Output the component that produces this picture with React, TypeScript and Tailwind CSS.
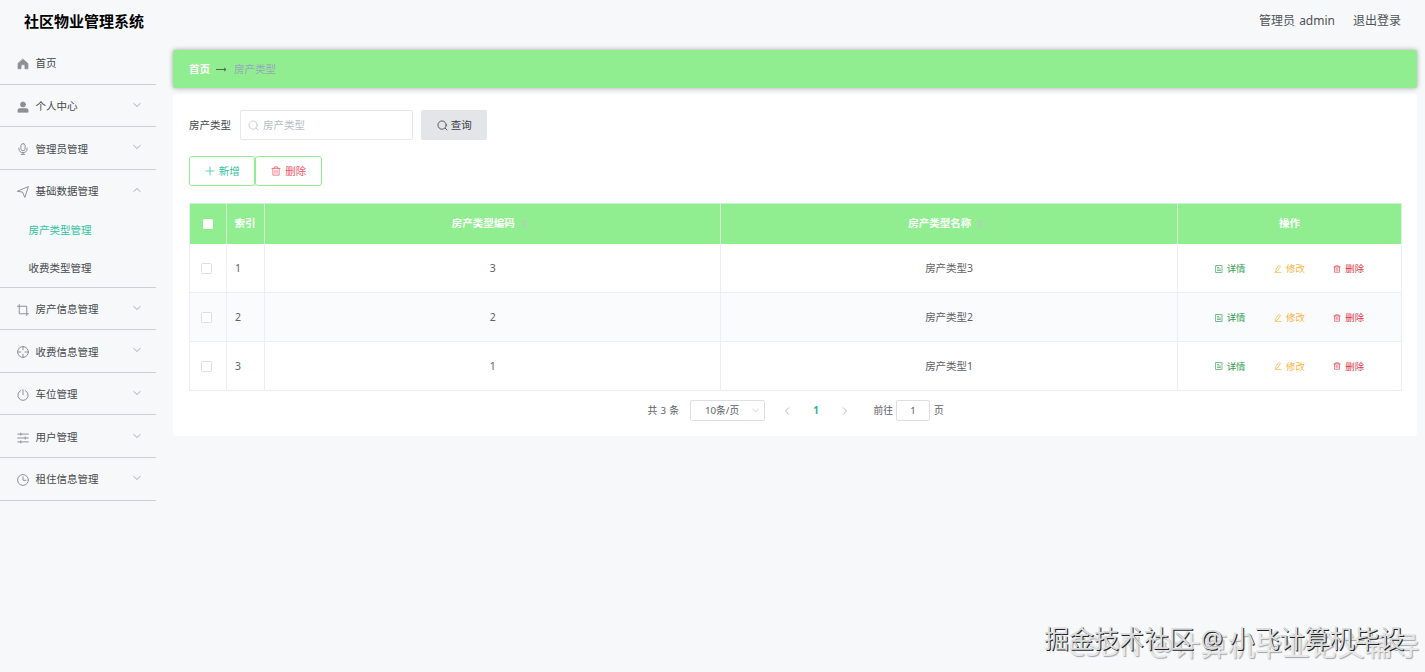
import { useState } from 'react'
import type { ReactNode } from 'react'

type IconProps = { className?: string }

function Svg({ className, children, w = 1 }: { className?: string; children: ReactNode; w?: number }) {
  return (
    <svg
      viewBox="0 0 16 16"
      fill="none"
      stroke="currentColor"
      strokeWidth={w}
      strokeLinecap="round"
      strokeLinejoin="round"
      className={className}
    >
      {children}
    </svg>
  )
}

const HomeIcon = ({ className }: IconProps) => (
  <Svg className={className}>
    <path fill="currentColor" d="M8 1.6 L14.6 7.4 V14.4 H10.6 V10.4 Q10.6 8.8 8 8.8 Q5.4 8.8 5.4 10.4 V14.4 H1.4 V7.4 Z" />
  </Svg>
)

const UserIcon = ({ className }: IconProps) => (
  <Svg className={className}>
    <circle cx="8" cy="4.6" r="3.4" fill="currentColor" />
    <path fill="currentColor" d="M1.3 14.6 V12 Q1.3 10.2 3.2 10.2 H12.8 Q14.7 10.2 14.7 12 V14.6 Z" />
  </Svg>
)

const MicIcon = ({ className }: IconProps) => (
  <Svg className={className} w={1.3}>
    <rect x="5.2" y="0.8" width="5.6" height="9.6" rx="2.8" />
    <path d="M2.6 6.6 V7.6 A5.4 5.2 0 0 0 13.4 7.6 V6.6 M8 12.8 V15.2 M5.8 15.2 H10.2" />
  </Svg>
)

const SendIcon = ({ className }: IconProps) => (
  <Svg className={className} w={1.3}>
    <path d="M0.8 6.8 L15.2 0.8 L10.4 15.2 L7.6 8.6 Z" />
  </Svg>
)

const CropIcon = ({ className }: IconProps) => (
  <Svg className={className} w={1.3}>
    <path d="M3 0.8 V13 H15.4 M0.6 3 H13 V15.4" />
  </Svg>
)

const AimIcon = ({ className }: IconProps) => (
  <Svg className={className} w={1.3}>
    <circle cx="8" cy="8" r="7.2" />
    <path d="M8 1 V5 M8 11 V15 M1 8 H5 M11 8 H15" />
  </Svg>
)

const PowerIcon = ({ className }: IconProps) => (
  <Svg className={className} w={1.3}>
    <path d="M5 2 A6.9 6.9 0 1 0 11 2 M8 0.8 V7.6" />
  </Svg>
)

const SlidersIcon = ({ className }: IconProps) => (
  <Svg className={className} w={1.3}>
    <path d="M1 2.8 H15 M1 8 H15 M1 13.2 H15 M5 1.4 V4.2 M11 6.6 V9.4 M5 11.8 V14.6" />
  </Svg>
)

const ClockIcon = ({ className }: IconProps) => (
  <Svg className={className} w={1.3}>
    <circle cx="8" cy="8" r="7.2" />
    <path d="M8 3.8 V8.4 H12" />
  </Svg>
)

const Chevron = ({ className }: IconProps) => (
  <Svg className={className} w={1.7}>
    <path d="M1.6 5 L8 11 L14.4 5" />
  </Svg>
)

const SearchIcon = ({ className }: IconProps) => (
  <Svg className={className} w={1.2}>
    <circle cx="7.4" cy="7.4" r="6" />
    <path d="M12 12 L14.6 14.6" />
  </Svg>
)

const PlusIcon = ({ className }: IconProps) => (
  <Svg className={className} w={1.2}>
    <path d="M8 1.5 V14.5 M1.5 8 H14.5" />
  </Svg>
)

const TrashIcon = ({ className }: IconProps) => (
  <Svg className={className} w={1.2}>
    <path d="M1.5 3.8 H14.5 M5.4 3.8 V1.4 H10.6 V3.8 M3 3.8 V14.6 H13 V3.8 M6.4 6.8 V11.6 M9.6 6.8 V11.6" />
  </Svg>
)

const DocIcon = ({ className }: IconProps) => (
  <Svg className={className} w={1.3}>
    <path d="M2 1 H14 V15 H2 Z M5 5 H7.5 M5 8 H11 M5 11 H11" />
  </Svg>
)

const EditIcon = ({ className }: IconProps) => (
  <Svg className={className} w={1.4}>
    <path d="M10.4 1.2 L13 3 L6.6 12.4 L3 13.6 L3.4 10.2 Z M1.6 15.2 H14.4" />
  </Svg>
)

type MenuItem = {
  label: string
  icon: (p: IconProps) => ReactNode
  leaf?: boolean
  children?: string[]
}

const MENU: MenuItem[] = [
  { label: '首页', icon: HomeIcon, leaf: true },
  { label: '个人中心', icon: UserIcon },
  { label: '管理员管理', icon: MicIcon },
  { label: '基础数据管理', icon: SendIcon, children: ['房产类型管理', '收费类型管理'] },
  { label: '房产信息管理', icon: CropIcon },
  { label: '收费信息管理', icon: AimIcon },
  { label: '车位管理', icon: PowerIcon },
  { label: '用户管理', icon: SlidersIcon },
  { label: '租住信息管理', icon: ClockIcon },
]

const ROWS = [
  { id: 1, code: '3', name: '房产类型3' },
  { id: 2, code: '2', name: '房产类型2' },
  { id: 3, code: '1', name: '房产类型1' },
]

const COLS = 'grid grid-cols-[37px_38px_456.5px_456.5px_1fr]'

function Sidebar() {
  const [open, setOpen] = useState('基础数据管理')
  const [active, setActive] = useState('房产类型管理')

  return (
    <aside className="w-[156px] shrink-0 text-[10.5px] text-[#45484d]">
      {MENU.map(({ label, icon: Icon, leaf, children }) => (
        <div key={label} className="border-b border-[#cdcfd3]">
          <button
            onClick={() => setOpen(open === label ? '' : label)}
            className="flex h-[41.65px] w-full items-center pt-[1.5px] pr-[15px] pl-[17px]"
          >
            <Icon className="mt-px mr-[6.5px] size-3 text-[#8c8f95]" />
            <span>{label}</span>
            {!leaf && (
              <Chevron
                className={
                  children && open === label
                    ? 'mb-[3px] ml-auto size-2 rotate-180 text-[#9a9da3]'
                    : 'mb-[3px] ml-auto size-2 text-[#9a9da3]'
                }
              />
            )}
          </button>
          {children && open === label && children.map((c) => (
            <button
              key={c}
              onClick={() => setActive(c)}
              className={
                active === c
                  ? 'flex h-[37.5px] w-full items-center pl-[28.5px] text-[#2ec4a0]'
                  : 'flex h-[37.5px] w-full items-center pt-px pl-[28.5px]'
              }
            >
              {c}
            </button>
          ))}
        </div>
      ))}
    </aside>
  )
}

function SortCaret() {
  return (
    <svg viewBox="0 0 8 12" className="mr-[3px] ml-[6px] h-[10px] w-[7px] fill-[#b0cfb8]">
      <path d="M4 0.5 L7.5 5 H0.5 Z M4 11.5 L0.5 7 H7.5 Z" />
    </svg>
  )
}

function Table() {
  return (
    <div className="mt-[17px] border-l border-[#ebeef5] text-[10.5px] text-[#606266]">
      <div className={`${COLS} h-[41px] border-t border-[#c9f5cb] bg-[#90ee90] font-bold text-white *:flex *:items-center *:border-r *:border-[#d5f8d6] *:pb-px`}>
        <div className="justify-center">
          <span className="size-[10px] rounded-[1.5px] bg-white" />
        </div>
        <div className="pl-[7.5px]">索引</div>
        <div className="justify-center pr-[3px]">房产类型编码<SortCaret /></div>
        <div className="justify-center pr-[3px]">房产类型名称<SortCaret /></div>
        <div className="justify-center">操作</div>
      </div>
      {ROWS.map((r, i) => (
        <div
          key={r.id}
          className={`${COLS} h-[48.9px] border-b border-[#ebeef5] *:flex *:items-center *:border-r *:border-[#ebeef5] *:pt-[1.5px] ${i % 2 ? 'bg-[#fafbfd]' : 'bg-white'}`}
        >
          <div className="justify-center pr-[3px]">
            <span className="size-[11px] rounded-[1.5px] border border-[#dcdfe6] bg-white" />
          </div>
          <div className="pl-[8px]">{r.id}</div>
          <div className="justify-center">{r.code}</div>
          <div className="justify-center">{r.name}</div>
          <div className="justify-center gap-[28.5px] text-[9.4px]">
            <button className="flex items-center gap-1 text-[#2f9e4f]">
              <DocIcon className="size-[8px]" />详情
            </button>
            <button className="flex items-center gap-1 text-[#fbb43c]">
              <EditIcon className="size-[8px]" />修改
            </button>
            <button className="flex items-center gap-1 text-[#dc3545]">
              <TrashIcon className="size-[8px]" />删除
            </button>
          </div>
        </div>
      ))}
    </div>
  )
}

function Pagination() {
  return (
    <div className="mt-[9.5px] flex h-[21px] items-center pl-[458.5px] text-[9.75px] text-[#606266]">
      <span className="[word-spacing:0.7px]">共 3 条</span>
      <div className="ml-[11px] flex h-[21px] w-[75px] items-center rounded-[2px] border border-[#dcdfe6] pr-[5px] pl-[14px]">
        10条/页
        <Chevron className="ml-auto size-[7px] text-[#c0c4cc]" />
      </div>
      <Chevron className="ml-[18px] size-2 rotate-90 text-[#a8abb2]" />
      <span className="ml-[22px] w-[6px] text-center font-bold text-[#1fb98f]">1</span>
      <Chevron className="ml-[22px] size-2 -rotate-90 text-[#a8abb2]" />
      <span className="ml-[24.5px]">前往</span>
      <div className="ml-[3px] flex h-[21px] w-[34px] items-center justify-center rounded-[2px] border border-[#dcdfe6]">1</div>
      <span className="ml-[4px]">页</span>
    </div>
  )
}

export default function App() {
  return (
    <div className="relative h-[672px] w-[1425px] overflow-hidden bg-[#f6f8fa] font-['Noto_Sans','Noto_Sans_CJK_SC',sans-serif] leading-none">
      <header className="flex h-[42px] items-center justify-between px-6 text-xs leading-none text-[#505256]">
        <h1 className="text-[15px] font-bold text-black">社区物业管理系统</h1>
        <div className="flex items-center gap-[18px]">
          <span className="[word-spacing:1px]">管理员 admin</span>
          <button>退出登录</button>
        </div>
      </header>

      <div className="flex">
        <Sidebar />
        <main className="mt-2 ml-[17.4px] w-[1244px]">
          <nav className="flex h-[38px] items-center rounded-[2px] bg-[#90ee90] pl-[15.5px] text-[10.5px] shadow-[0_0_5px_rgba(0,0,0,0.35)]">
            <span className="font-bold text-white">首页</span>
            <svg viewBox="0 0 11 7" className="mx-[6.5px] h-[7px] w-[11px] fill-none stroke-[#404740] stroke-[0.8]">
              <path d="M0 3.5 H10 M8 1.8 L10 3.5 L8 5.2" />
            </svg>
            <span className="text-[#97a8be]">房产类型</span>
          </nav>

          <section className="mt-[6px] h-[342px] rounded-[4px] bg-white px-[15.5px] pt-4">
            <div className="flex h-[30px] items-center text-[10.5px] text-[#45484d]">
              <label>房产类型</label>
              <div className="ml-[9px] flex h-[30px] w-[173px] items-center rounded-[2px] border border-[#e4e7ed] pl-[7px] text-[#c0c4cc]">
                <SearchIcon className="mr-1 size-[11px]" />
                <input className="w-32 outline-none placeholder:text-[#b8bcc5]" placeholder="房产类型" />
              </div>
              <button className="ml-2 flex h-[30px] w-[66.5px] items-center justify-center rounded-[2px] bg-[#e3e5e9] text-[#3b3d41]">
                <SearchIcon className="mr-[3px] size-[11px]" />
                查询
              </button>
            </div>

            <div className="mt-4 flex text-[10.5px]">
              <button className="flex h-[30px] w-[66.5px] items-center justify-center rounded-[3px] border border-[#90ee90] text-[#2ec4a0]">
                <PlusIcon className="mr-1 size-[10px]" />
                新增
              </button>
              <button className="flex h-[30px] w-[66.5px] items-center justify-center rounded-[3px] border border-[#90ee90] text-[#f2566a]">
                <TrashIcon className="mr-1 size-[10px]" />
                删除
              </button>
            </div>

            <Table />
            <Pagination />
          </section>
        </main>
      </div>

      {/* Watermarks */}
      <div className="absolute top-[632px] left-[1068px] text-[27.4px] whitespace-nowrap text-[#e6e8ea] [text-shadow:1px_1px_1px_#a4a6a9]">
        CSDN @计算机毕业论文辅导
      </div>
      <div className="absolute top-[626px] left-[1044px] text-[25px] whitespace-nowrap text-[#d9dbdd] [text-shadow:1px_1px_0_#222]">
        掘金技术社区 @ 小飞计算机毕设
      </div>
    </div>
  )
}
